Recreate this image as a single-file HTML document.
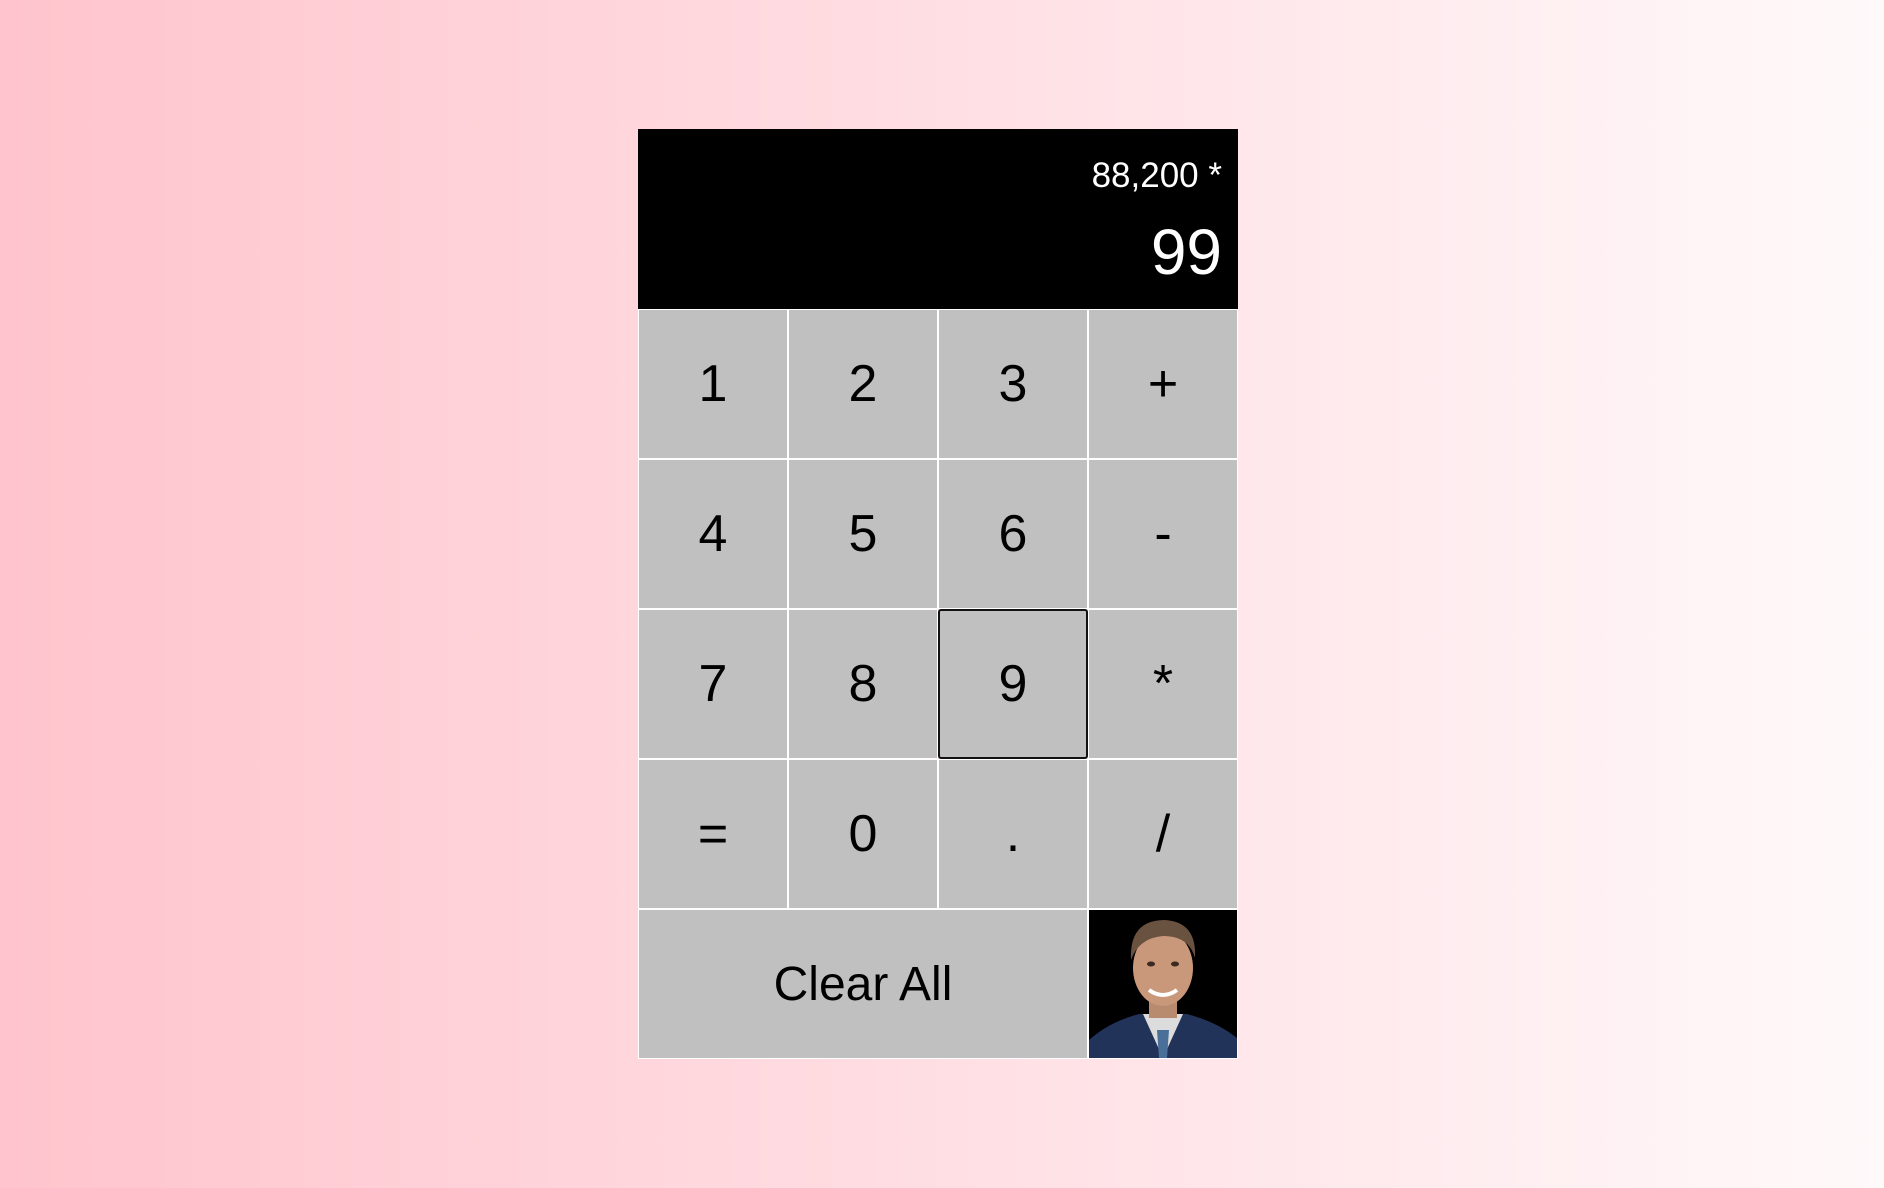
<!DOCTYPE html>
<html><head><meta charset="utf-8"><style>
html,body{margin:0;padding:0}
body{width:1884px;height:1188px;background:linear-gradient(to right,#ffc4cd,#fff9fa);font-family:"Liberation Sans",Arial,sans-serif;position:relative;overflow:hidden}
#calc{position:absolute;left:638px;top:129px;width:600px}
#disp{background:#000;height:180px;color:#fff;text-align:right;position:relative}
#prev{position:absolute;right:16px;top:27px;font-size:35px}
#cur{position:absolute;right:16px;top:86px;font-size:64px}
#grid{display:grid;grid-template-columns:repeat(4,150px);grid-auto-rows:150px}
.b{background:#c0c0c0;border:1px solid #fff;box-sizing:border-box;display:flex;align-items:center;justify-content:center;font-size:52px;color:#000}
.f{border:2px solid #111;border-radius:3px}
.w{grid-column:span 3;font-size:48px}
.p{background:#000;border:1px solid #fff;box-sizing:border-box;overflow:hidden}
</style></head><body>
<div id="calc">
<div id="disp"><div id="prev">88,200 *</div><div id="cur">99</div></div>
<div id="grid">
<div class="b">1</div><div class="b">2</div><div class="b">3</div><div class="b">+</div>
<div class="b">4</div><div class="b">5</div><div class="b">6</div><div class="b">-</div>
<div class="b">7</div><div class="b">8</div><div class="b f">9</div><div class="b">*</div>
<div class="b">=</div><div class="b">0</div><div class="b">.</div><div class="b">/</div>
<div class="b w">Clear All</div>
<div class="p"><svg width="148" height="148" viewBox="0 0 148 148">
<rect width="148" height="148" fill="#000"/>
<path d="M0 148 L0 130 Q20 112 50 104 L98 104 Q128 112 148 128 L148 148Z" fill="#22335a"/>
<path d="M54 104 L74 148 L94 104Z" fill="#dcdcdc"/>
<path d="M68 120 L80 120 L78 148 L70 148Z" fill="#4a6f99"/>
<rect x="60" y="80" width="28" height="28" fill="#b88a6e"/>
<ellipse cx="74" cy="58" rx="30" ry="38" fill="#c9977a"/>
<path d="M42 50 Q40 10 76 10 Q108 12 106 48 Q100 26 74 26 Q50 28 42 50Z" fill="#6a5240"/>
<path d="M60 80 Q74 90 88 80" stroke="#fff" stroke-width="4" fill="none"/>
<ellipse cx="62" cy="54" rx="4" ry="2.5" fill="#3a2a20"/><ellipse cx="86" cy="54" rx="4" ry="2.5" fill="#3a2a20"/>
</svg></div>
</div>
</div>
</body></html>
